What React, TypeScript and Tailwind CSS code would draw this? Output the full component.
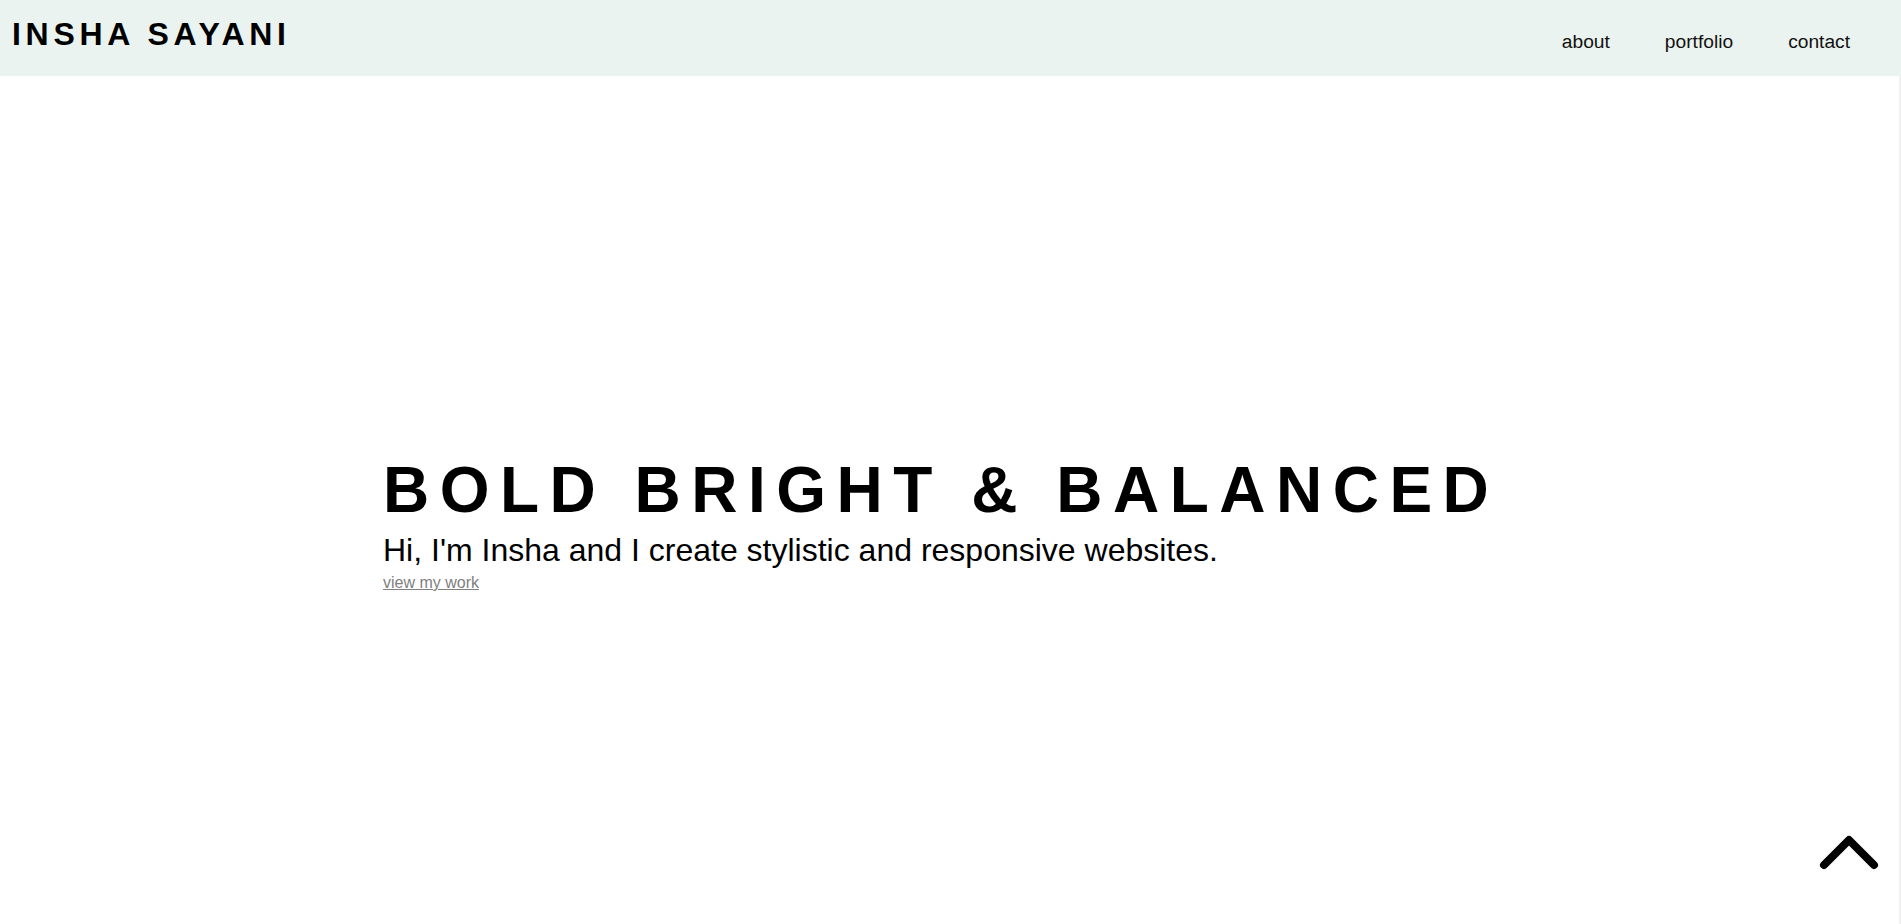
export default function App() {
    const links = ["about", "portfolio", "contact"];

    return (
        <div className="min-h-screen flex flex-col bg-white text-black font-['Liberation_Sans',Arial,sans-serif]">
            <header className="h-[76px] shrink-0 flex items-start justify-between bg-[#ebf3f0]">
                <div className="pl-[12px] pt-[16px] text-[32px] font-bold tracking-[4.7px] leading-[37px]">
                    INSHA SAYANI
                </div>
                <nav className="flex gap-[55px] pr-[51px] pt-[31px] text-[19.2px] leading-[22px] text-[#111]">
                    {links.map((l) => (
                        <a key={l} href={`#${l}`}>
                            {l}
                        </a>
                    ))}
                </nav>
            </header>

            <div className="flex-1 flex">
                <main className="flex-1 pl-[383px] pt-[377px]">
                    <h1 className="text-[64px] font-bold tracking-[10.5px] leading-[74px]">
                        BOLD BRIGHT &amp; BALANCED
                    </h1>
                    <p className="mt-[5px] text-[32px] leading-[37px]">
                        Hi, I'm Insha and I create stylistic and responsive websites.
                    </p>
                    <a href="#portfolio" className="block mt-[5px] text-[16px] leading-[18px] text-[#808080] underline w-fit">
                        view my work
                    </a>
                </main>
                <div className="w-[2px] bg-[#f0f0f0]" />
            </div>

            <a href="#top" className="fixed left-[1816px] top-[832px]">
                <svg width="66" height="42" viewBox="0 0 66 42" fill="none">
                    <path d="M8 33 L33 8 L58 33" stroke="#000" strokeWidth="8" strokeLinecap="round" strokeLinejoin="round" />
                </svg>
            </a>
        </div>
    );
}
